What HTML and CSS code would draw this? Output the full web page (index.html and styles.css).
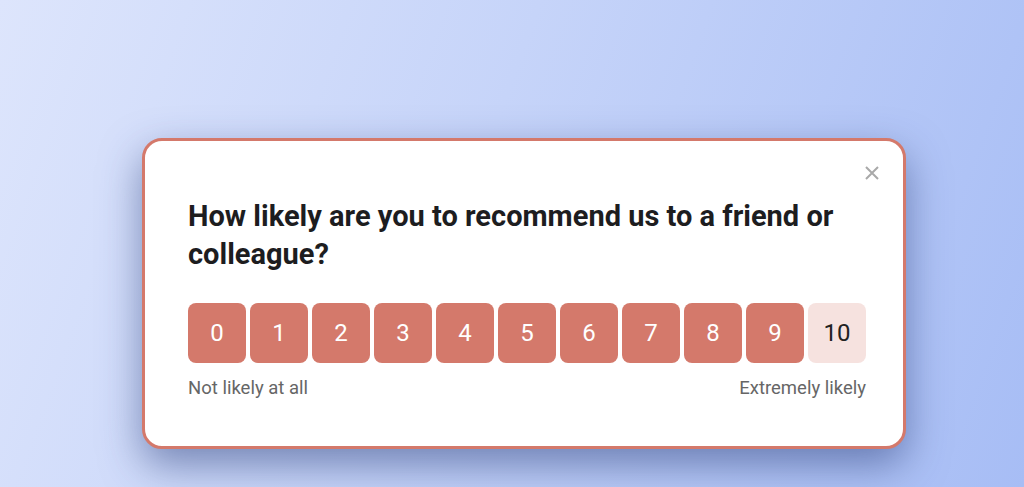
FILE: index.html
```html
<!DOCTYPE html>
<html lang="en">
<head>
    <meta charset="UTF-8">
    <meta name="viewport" content="width=device-width, initial-scale=1.0">
    <title>How likely are you to recommend us?</title>
    <link rel="stylesheet" href="styles.css">
</head>
<body>
    <div class="page">
        <div class="survey">
            <button class="close" aria-label="Close">
                <svg width="14" height="14" viewBox="0 0 14 14">
                    <path d="M1 1 L13 13 M13 1 L1 13" stroke="#a9a9a9" stroke-width="2" fill="none"/>
                </svg>
            </button>
            <h2 class="question">How likely are you to recommend us to a friend or colleague?</h2>
            <div class="scale">
                <button class="score">0</button>
                <button class="score">1</button>
                <button class="score">2</button>
                <button class="score">3</button>
                <button class="score">4</button>
                <button class="score">5</button>
                <button class="score">6</button>
                <button class="score">7</button>
                <button class="score">8</button>
                <button class="score">9</button>
                <button class="score score-light">10</button>
            </div>
            <div class="legend">
                <span>Not likely at all</span>
                <span>Extremely likely</span>
            </div>
        </div>
    </div>
</body>
</html>
```

FILE: styles.css
```css
html, body {
    margin: 0;
    height: 100%;
}
body {
    font-family: Roboto, "Liberation Sans", sans-serif;
    background: linear-gradient(110deg, #dde5fc 0%, #c6d4f9 45%, #a7bdf5 100%);
    overflow: hidden;
}
.page {
    padding: 138px 0 0 142px;
}
.survey {
    position: relative;
    box-sizing: border-box;
    width: 764px;
    padding: 56px 37px 46px 43px;
    background-color: white;
    border: 3px solid #d4796b;
    border-radius: 20px;
    box-shadow: 0 16px 40px rgba(45, 65, 125, 0.55);
}
.close {
    position: absolute;
    top: 25px;
    right: 24px;
    padding: 0;
    border: none;
    background: none;
    cursor: pointer;
    line-height: 0;
}
.question {
    margin: 0;
    font-size: 29px;
    font-weight: 700;
    line-height: 38px;
    color: #1d1d1f;
}
.scale {
    display: flex;
    gap: 4px;
    margin-top: 30px;
}
.score {
    width: 58px;
    height: 60px;
    padding: 0;
    border: none;
    border-radius: 8px;
    background-color: #d4796b;
    color: white;
    font-family: Roboto, "Liberation Sans", sans-serif;
    font-size: 24px;
    cursor: pointer;
}
.score-light {
    background-color: #f6e2df;
    color: #222;
}
.legend {
    display: flex;
    justify-content: space-between;
    margin-top: 13px;
    font-size: 18.5px;
    line-height: 24px;
    color: #666;
}
```
